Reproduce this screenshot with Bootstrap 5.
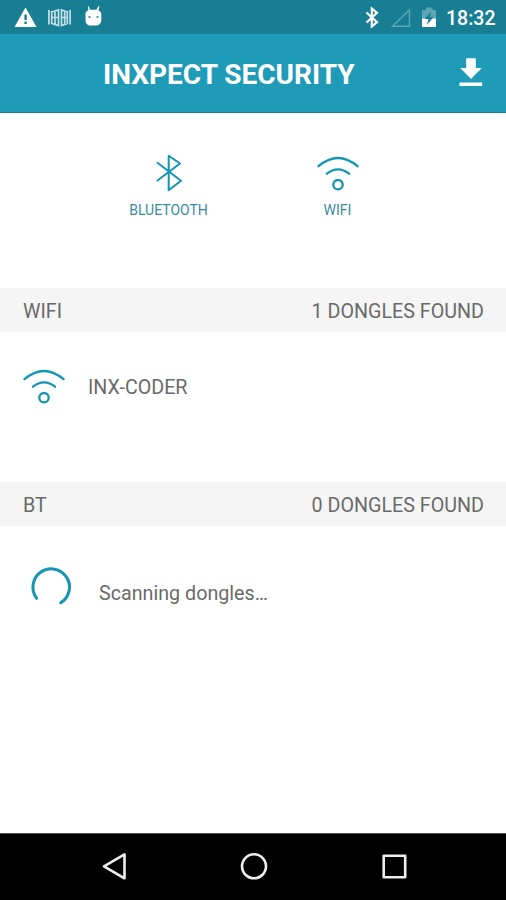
<!DOCTYPE html>
<html lang="en">
<head>
<meta charset="utf-8">
<meta name="viewport" content="width=device-width, initial-scale=1">
<title>Inxpect Security</title>
<link href="https://cdn.jsdelivr.net/npm/bootstrap@5.3.0/dist/css/bootstrap.min.css" rel="stylesheet">
<style>
  body { font-family: Roboto, "Noto Sans", sans-serif; color: #6a6a6a; background: #fff; line-height: 1; overflow: hidden; }
  svg { display: block; flex: none; }
  .status { height: 34px; background: #177e93; padding: 0 10px 0 14px; }
  .clock { font-size: 19.5px; font-weight: 500; margin-left: 9px; width: 50px; white-space: nowrap; padding-top: 3px; }
  .appbar { height: 79px; background: #1f9bb8; border-bottom: 1px solid #16809a; padding: 0 23px 0 103px; }
  .apptitle { font-size: 28px; font-weight: 700; width: 253px; white-space: nowrap; padding-top: 4px; }
  .tabs { height: 175px; padding: 38px 84px 0 84px; }
  .tab-item { width: 169px; color: #3a8d9e; font-size: 14px; }
  .stroke { fill: none; stroke: #1495b2; stroke-linecap: round; stroke-linejoin: round; }
  .section-bar { height: 44px; background: #f5f5f5; font-size: 19.700px; padding: 4px 22px 0 23px; }
  .device { height: 150px; padding: 32px 0 0 21px; font-size: 19.700px; }
  .device-name { margin: 14px 0 0 21px; }
  .scan { padding: 38px 0 0 28px; font-size: 19.700px; }
  .scan-text { margin-left: 25px; padding-top: 14px; }
  .keys { height: 67px; background: #000; border-top: 1px solid #555; padding: 0 96px 0 98px; }
</style>
</head>
<body class="d-flex flex-column vh-100">
  <div class="status d-flex align-items-center text-white">
    <svg width="90" height="34" viewBox="14 0 90 34" fill="#fff">
      <path d="M25.500 7.500 36.500 27H14.500z"/>
      <path d="M24.400 14.500h2.400v5.500h-2.400zM24.400 21.500h2.400v2.500h-2.400z" fill="#177e93"/>
      <g fill="none" stroke="#c4e0e6" stroke-width="1.700">
        <path d="M48.900 10v14.500M51.700 11v13M51.500 12l7-2v15.500l-7-2M51.500 17.500h7M55 11v13.500M70.100 10v14.500M67.300 11v13M67.500 12l-6-2v15.500l6-2M61.500 17.500h6M64.700 11v13.500"/>
      </g>
      <path d="M85.500 13.500c0-1.500 1.500-3 3-3.300L87.800 6.500l1-.3 1.200 3.600h6.500l2-3.800 1 .4-1.200 4c2 .5 3 2 3 3.600v6c0 3.500-2.500 5.500-5.500 5.500h-5c-3.300 0-5.300-2-5.300-5.500z"/>
      <path d="M88.500 17h2M96.500 17h2" stroke="#177e93" stroke-width="1.300"/>
    </svg>
    <svg class="ms-auto" width="76" height="34" viewBox="361 0 76 34">
      <path d="M366.500 12.500l10.500 9.700-5.200 4.300V8.500l5.200 4.300-10.500 9.700" fill="none" stroke="#fff" stroke-width="2.200"/>
      <path d="M392.500 26.300 409.500 10v16.300z" fill="none" stroke="#5ba5b4" stroke-width="1.400"/>
      <path d="M422 10h4V7.500h6.500V10h3.500v17h-14z" fill="#5ba5b4"/>
      <path d="M422 18.500h14V27h-14z" fill="#fff"/>
      <path d="M431.500 11.500 424.500 19h4l-1.500 6 6.500-8h-3.500z" fill="#177e93"/>
    </svg>
    <span class="clock">18:32</span>
  </div>

  <header class="appbar d-flex align-items-center justify-content-between text-white">
    <span class="apptitle">INXPECT SECURITY</span>
    <svg width="24" height="30" viewBox="459 58.500 24 30" fill="#fff"><path d="M466.200 58.800h9.600v9.700h6L471 79.500l-10.800-11h6zM459.500 83h22.700v3.500h-22.700z"/></svg>
  </header>

  <main class="flex-grow-1">
    <div class="tabs d-flex">
      <div class="tab-item d-flex flex-column align-items-center">
        <svg width="34" height="44" viewBox="152 151 34 44"><path class="stroke" stroke-width="2" d="M157.500 162.800 181 180.800 168.700 190.300V155.700L180 163.500 157.500 180.500"/></svg>
        <span class="mt-2">BLUETOOTH</span>
      </div>
      <div class="tab-item d-flex flex-column align-items-center">
        <svg width="46" height="44" viewBox="315 151 46 44"><g class="stroke" stroke-width="2.300"><path d="M318.500 166.200Q338 149.800 357.500 166.200M327 173.700Q338 165 349 173.700"/><circle cx="338" cy="184.700" r="4.700"/></g></svg>
        <span class="mt-2">WIFI</span>
      </div>
    </div>

    <div class="section-bar d-flex align-items-center justify-content-between"><span>WIFI</span><span>1 DONGLES FOUND</span></div>
    <div class="device d-flex align-items-start">
      <svg width="46" height="44" viewBox="315 151 46 44"><g class="stroke" stroke-width="2.300"><path d="M318.500 166.200Q338 149.800 357.500 166.200M327 173.700Q338 165 349 173.700"/><circle cx="338" cy="184.700" r="4.700"/></g></svg>
      <span class="device-name">INX-CODER</span>
    </div>

    <div class="section-bar d-flex align-items-center justify-content-between"><span>BT</span><span>0 DONGLES FOUND</span></div>
    <div class="scan d-flex align-items-center">
      <svg width="46" height="46" viewBox="28 564 46 46"><path class="stroke" stroke-width="3" d="M36.700 598.300A18.300 18.300 0 1 1 60.700 602.800"/></svg>
      <span class="scan-text">Scanning dongles…</span>
    </div>
  </main>

  <footer class="keys d-flex align-items-center justify-content-between">
    <svg width="32" height="32" viewBox="97 851 32 32" fill="none" stroke="#eee" stroke-width="2.600" stroke-linejoin="round"><path d="M103 866.300 123.500 854.300v24z"/></svg>
    <svg width="32" height="32" viewBox="237.500 851 32 32" fill="none" stroke="#eee" stroke-width="2.600"><circle cx="253.500" cy="866.300" r="12"/></svg>
    <svg width="32" height="32" viewBox="378 851 32 32" fill="none" stroke="#eee" stroke-width="2.600" stroke-linejoin="round"><path d="M383.700 855.700h21.500v21.500h-21.500z"/></svg>
  </footer>
<script src="https://cdn.jsdelivr.net/npm/bootstrap@5.3.0/dist/js/bootstrap.bundle.min.js"></script>
</body>
</html>
